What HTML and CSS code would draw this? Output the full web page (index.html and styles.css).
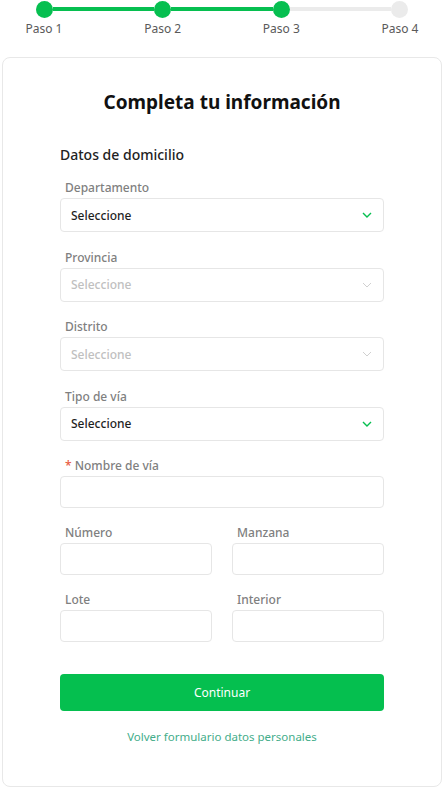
FILE: index.html
```html
<!DOCTYPE html>
<html lang="es">
<head>
<meta charset="utf-8">
<title>Completa tu información</title>
<link rel="stylesheet" href="styles.css">
</head>
<body>
<div class="stepper">
  <div class="track">
    <span class="dot done"></span>
    <span class="bar done"></span>
    <span class="dot done"></span>
    <span class="bar done"></span>
    <span class="dot done"></span>
    <span class="bar"></span>
    <span class="dot"></span>
  </div>
  <div class="step-labels">
    <span>Paso 1</span>
    <span>Paso 2</span>
    <span>Paso 3</span>
    <span>Paso 4</span>
  </div>
</div>

<main class="card">
  <h1 class="title">Completa tu información</h1>
  <h2 class="section">Datos de domicilio</h2>

  <div class="field sel">
    <label class="label">Departamento</label>
    <div class="select">
      <span>Seleccione</span>
      <svg class="chev" width="10" height="6" viewBox="0 0 10 6"><path d="M1 1l4 4 4-4" fill="none" stroke="currentColor" stroke-width="1.4"/></svg>
    </div>
  </div>

  <div class="field sel">
    <label class="label">Provincia</label>
    <div class="select disabled">
      <span>Seleccione</span>
      <svg class="chev" width="10" height="6" viewBox="0 0 10 6"><path d="M1 1l4 4 4-4" fill="none" stroke="currentColor" stroke-width="1"/></svg>
    </div>
  </div>

  <div class="field sel">
    <label class="label">Distrito</label>
    <div class="select disabled">
      <span>Seleccione</span>
      <svg class="chev" width="10" height="6" viewBox="0 0 10 6"><path d="M1 1l4 4 4-4" fill="none" stroke="currentColor" stroke-width="1"/></svg>
    </div>
  </div>

  <div class="field">
    <label class="label">Tipo de vía</label>
    <div class="select">
      <span>Seleccione</span>
      <svg class="chev" width="10" height="6" viewBox="0 0 10 6"><path d="M1 1l4 4 4-4" fill="none" stroke="currentColor" stroke-width="1.4"/></svg>
    </div>
  </div>

  <div class="field">
    <label class="label"><span class="req">*</span> Nombre de vía</label>
    <div class="input"></div>
  </div>

  <div class="row">
    <div class="field">
      <label class="label">Número</label>
      <div class="input"></div>
    </div>
    <div class="field">
      <label class="label">Manzana</label>
      <div class="input"></div>
    </div>
  </div>

  <div class="row">
    <div class="field">
      <label class="label">Lote</label>
      <div class="input"></div>
    </div>
    <div class="field">
      <label class="label">Interior</label>
      <div class="input"></div>
    </div>
  </div>

  <button class="btn">Continuar</button>
  <a class="back">Volver formulario datos personales</a>
</main>
</body>
</html>
```
FILE: styles.css
```css
* { box-sizing: border-box; }
html, body { margin: 0; padding: 0; background: #fff; }
body {
  font-family: "Noto Sans", "Open Sans", sans-serif;
  color: #222;
  width: 446px;
}

.stepper { height: 57px; }
.track {
  display: flex;
  align-items: center;
  padding: 1px 38px 0 36px;
  height: 17px;
}
.dot {
  width: 17px;
  height: 17px;
  border-radius: 50%;
  background: #ebebeb;
  flex: none;
}
.dot.done { background: #06bf50; }
.bar {
  flex: 1;
  height: 4px;
  background: #ebebeb;
}
.bar.done { background: #06bf50; }
.step-labels {
  display: flex;
  justify-content: space-between;
  padding: 4px 16px 0 14px;
}
.step-labels span {
  width: 60px;
  text-align: center;
  font-size: 12px;
  line-height: 16px;
  color: #5a5a5a;
}

.card {
  margin: 0 4px 2px 2px;
  border: 1px solid #e8e8e8;
  border-radius: 8px;
  padding: 32px 57px 41px 57px;
  display: flex;
  flex-direction: column;
}
.title {
  margin: 0;
  text-align: center;
  font-size: 19px;
  line-height: 24px;
  font-weight: 700;
  color: #111;
}
.section {
  margin: 31px 0 15px;
  font-size: 14px;
  line-height: 20px;
  font-weight: 500;
  color: #222;
}
.field { margin-bottom: 17px; display: flex; flex-direction: column; }
.field.sel { margin-bottom: 17.5px; }
.label {
  font-size: 12px;
  line-height: 16px;
  font-weight: 500;
  color: #808080;
  padding-left: 5px;
  margin-bottom: 2px;
}
.req { color: #e85a40; }
.select {
  height: 34px;
  border: 1px solid #e6e6e6;
  border-radius: 4px;
  display: flex;
  align-items: center;
  justify-content: space-between;
  padding: 0 11px 0 10px;
  font-size: 12px;
  font-weight: 500;
  color: #1f1f1f;
}
.select .chev { color: #06bf50; }
.select.disabled { color: #c0c0c0; }
.select.disabled .chev { color: #d0d0d0; }
.input {
  height: 32px;
  border: 1px solid #e6e6e6;
  border-radius: 4px;
}
.row {
  display: grid;
  grid-template-columns: 1fr 1fr;
  column-gap: 20px;
}
.btn {
  margin-top: 15px;
  height: 37px;
  border: 0;
  border-radius: 4px;
  background: #05bf4f;
  color: #fff;
  font-family: inherit;
  font-size: 12px;
  font-weight: 400;
}
.back {
  margin-top: 18px;
  text-align: center;
  font-size: 11.5px;
  line-height: 16px;
  color: #44ad8a;
}
```
